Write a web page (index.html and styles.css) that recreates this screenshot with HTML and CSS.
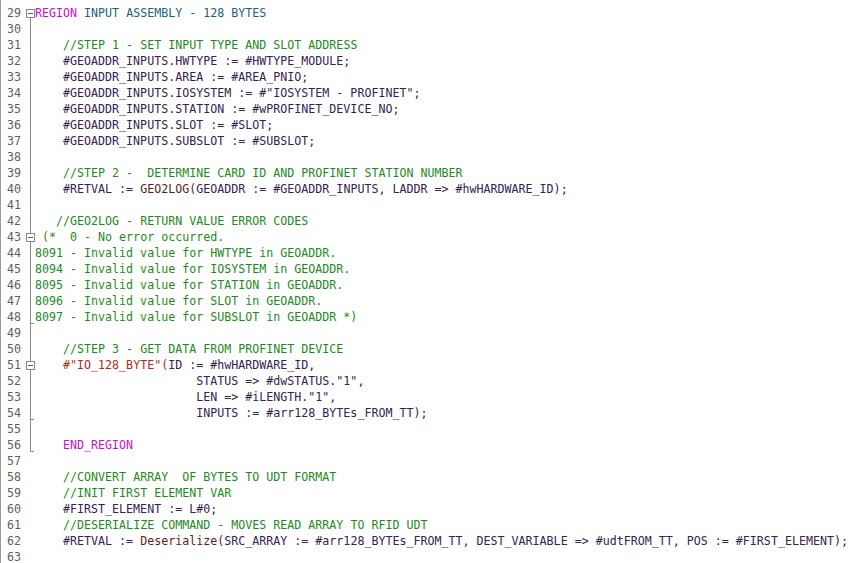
FILE: index.html
```html
<!DOCTYPE html>
<html>
<head>
<meta charset="utf-8">
<link rel="stylesheet" href="styles.css">
</head>
<body>
<div class="editor">
  <div class="row"><span class="num">29</span><span class="fold box first"></span><span class="code"><span class="k">REGION</span> <span class="rn">INPUT ASSEMBLY - 128 BYTES</span></span></div>
  <div class="row"><span class="num">30</span><span class="fold v"></span><span class="code"></span></div>
  <div class="row"><span class="num">31</span><span class="fold v"></span><span class="code">    <span class="c">//STEP 1 - SET INPUT TYPE AND SLOT ADDRESS</span></span></div>
  <div class="row"><span class="num">32</span><span class="fold v"></span><span class="code">    #GEOADDR_INPUTS.HWTYPE := #HWTYPE_MODULE;</span></div>
  <div class="row"><span class="num">33</span><span class="fold v"></span><span class="code">    #GEOADDR_INPUTS.AREA := #AREA_PNIO;</span></div>
  <div class="row"><span class="num">34</span><span class="fold v"></span><span class="code">    #GEOADDR_INPUTS.IOSYSTEM := #"IOSYSTEM - PROFINET";</span></div>
  <div class="row"><span class="num">35</span><span class="fold v"></span><span class="code">    #GEOADDR_INPUTS.STATION := #wPROFINET_DEVICE_NO;</span></div>
  <div class="row"><span class="num">36</span><span class="fold v"></span><span class="code">    #GEOADDR_INPUTS.SLOT := #SLOT;</span></div>
  <div class="row"><span class="num">37</span><span class="fold v"></span><span class="code">    #GEOADDR_INPUTS.SUBSLOT := #SUBSLOT;</span></div>
  <div class="row"><span class="num">38</span><span class="fold v"></span><span class="code"></span></div>
  <div class="row"><span class="num">39</span><span class="fold v"></span><span class="code">    <span class="c">//STEP 2 -  DETERMINE CARD ID AND PROFINET STATION NUMBER</span></span></div>
  <div class="row"><span class="num">40</span><span class="fold v"></span><span class="code">    #RETVAL := <span class="f">GEO2LOG(</span>GEOADDR := #GEOADDR_INPUTS, LADDR =&gt; #hwHARDWARE_ID);</span></div>
  <div class="row"><span class="num">41</span><span class="fold v"></span><span class="code"></span></div>
  <div class="row"><span class="num">42</span><span class="fold v"></span><span class="code">   <span class="c">//GEO2LOG - RETURN VALUE ERROR CODES</span></span></div>
  <div class="row"><span class="num">43</span><span class="fold box"></span><span class="code"> <span class="c">(*  0 - No error occurred.</span></span></div>
  <div class="row"><span class="num">44</span><span class="fold v"></span><span class="code"><span class="c">8091 - Invalid value for HWTYPE in GEOADDR.</span></span></div>
  <div class="row"><span class="num">45</span><span class="fold v"></span><span class="code"><span class="c">8094 - Invalid value for IOSYSTEM in GEOADDR.</span></span></div>
  <div class="row"><span class="num">46</span><span class="fold v"></span><span class="code"><span class="c">8095 - Invalid value for STATION in GEOADDR.</span></span></div>
  <div class="row"><span class="num">47</span><span class="fold v"></span><span class="code"><span class="c">8096 - Invalid value for SLOT in GEOADDR.</span></span></div>
  <div class="row"><span class="num">48</span><span class="fold v tick"></span><span class="code"><span class="c">8097 - Invalid value for SUBSLOT in GEOADDR *)</span></span></div>
  <div class="row"><span class="num">49</span><span class="fold v"></span><span class="code"></span></div>
  <div class="row"><span class="num">50</span><span class="fold v"></span><span class="code">    <span class="c">//STEP 3 - GET DATA FROM PROFINET DEVICE</span></span></div>
  <div class="row"><span class="num">51</span><span class="fold box"></span><span class="code">    <span class="i">#"IO_128_BYTE"(</span>ID := #hwHARDWARE_ID,</span></div>
  <div class="row"><span class="num">52</span><span class="fold v"></span><span class="code">                       STATUS =&gt; #dwSTATUS."1",</span></div>
  <div class="row"><span class="num">53</span><span class="fold v"></span><span class="code">                       LEN =&gt; #iLENGTH."1",</span></div>
  <div class="row"><span class="num">54</span><span class="fold v tick"></span><span class="code">                       INPUTS := #arr128_BYTEs_FROM_TT);</span></div>
  <div class="row"><span class="num">55</span><span class="fold v"></span><span class="code"></span></div>
  <div class="row"><span class="num">56</span><span class="fold last"></span><span class="code">    <span class="k">END_REGION</span></span></div>
  <div class="row"><span class="num">57</span><span class="fold"></span><span class="code"></span></div>
  <div class="row"><span class="num">58</span><span class="fold"></span><span class="code">    <span class="c">//CONVERT ARRAY  OF BYTES TO UDT FORMAT</span></span></div>
  <div class="row"><span class="num">59</span><span class="fold"></span><span class="code">    <span class="c">//INIT FIRST ELEMENT VAR</span></span></div>
  <div class="row"><span class="num">60</span><span class="fold"></span><span class="code">    #FIRST_ELEMENT := L#0;</span></div>
  <div class="row"><span class="num">61</span><span class="fold"></span><span class="code">    <span class="c">//DESERIALIZE COMMAND - MOVES READ ARRAY TO RFID UDT</span></span></div>
  <div class="row"><span class="num">62</span><span class="fold"></span><span class="code">    #RETVAL := <span class="f">Deserialize(</span>SRC_ARRAY := #arr128_BYTEs_FROM_TT, DEST_VARIABLE =&gt; #udtFROM_TT, POS := #FIRST_ELEMENT);</span></div>
  <div class="row"><span class="num">63</span><span class="fold"></span><span class="code"></span></div>
</div>
</body>
</html>
```
FILE: styles.css
```css
html, body {
  margin: 0;
  padding: 0;
  background: #ffffff;
}

.editor {
  height: 563px;
  box-sizing: border-box;
  border-left: 1px solid #9a9a9a;
  padding-top: 5px;
  font-family: "DejaVu Sans Mono", "Liberation Mono", monospace;
  font-size: 11.65px;
  color: #35234f;
}

.row {
  display: flex;
  height: 16px;
  line-height: 16px;
}

.num {
  width: 20px;
  flex: none;
  text-align: right;
  color: #606060;
}

.fold {
  width: 14px;
  flex: none;
  position: relative;
}

.code {
  white-space: pre;
}

/* vertical guide */
.fold.v::before {
  content: "";
  position: absolute;
  left: 9px;
  top: 0;
  bottom: 0;
  border-left: 1px solid #8a8a8a;
}

.fold.tick::after {
  content: "";
  position: absolute;
  left: 9px;
  width: 4px;
  bottom: 1px;
  border-top: 1px solid #8a8a8a;
}

.fold.last::before {
  content: "";
  position: absolute;
  left: 9px;
  top: 0;
  height: 14px;
  border-left: 1px solid #8a8a8a;
}

.fold.last::after {
  content: "";
  position: absolute;
  left: 9px;
  width: 4px;
  top: 14px;
  border-top: 1px solid #8a8a8a;
}

/* fold box with minus */
.fold.box::before {
  content: "";
  position: absolute;
  left: 5px;
  top: 4px;
  width: 7px;
  height: 7px;
  border: 1px solid #8a8a8a;
  background:
    linear-gradient(#606060, #606060) center / 5px 1px no-repeat,
    #ffffff;
}

.fold.box::after {
  content: "";
  position: absolute;
  left: 9px;
  top: 13px;
  bottom: 0;
  border-left: 1px solid #8a8a8a;
}

.fold.box:not(.first) {
  background: linear-gradient(#8a8a8a, #8a8a8a) 9px 0 / 1px 4px no-repeat;
}

.k { color: #c810c8; }
.rn { color: #1f5f78; }
.c { color: #1e8a1e; }
.f { color: #5e1c1c; }
.i { color: #b22a14; }
```
